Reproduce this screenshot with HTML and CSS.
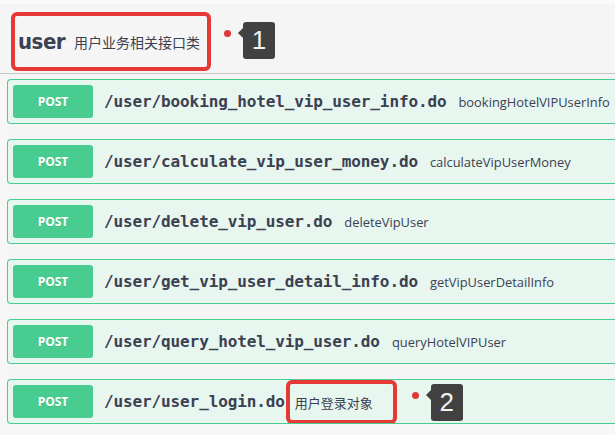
FILE: index.html
```html
<!DOCTYPE html>
<html lang="en">
<head>
  <meta charset="UTF-8" />
  <title>user</title>
  <link rel="stylesheet" href="styles.css">
</head>
<body>
  <div class="topbar"></div>
  <div class="tag-section">
    <!-- Tag header -->
    <div class="tag-header">
      <div class="mark mark-tag">
        <span class="tag-name">user</span>
        <span class="tag-desc">用户业务相关接口类</span>
      </div>
      <div class="callout">
        <span class="dot"></span>
        <span class="badge">1</span>
      </div>
    </div>

    <!-- Operations -->
    <div class="opblock">
      <span class="method">POST</span>
      <span class="path">/user/booking_hotel_vip_user_info.do</span>
      <span class="summary">bookingHotelVIPUserInfo</span>
    </div>
    <div class="opblock">
      <span class="method">POST</span>
      <span class="path">/user/calculate_vip_user_money.do</span>
      <span class="summary">calculateVipUserMoney</span>
    </div>
    <div class="opblock">
      <span class="method">POST</span>
      <span class="path">/user/delete_vip_user.do</span>
      <span class="summary">deleteVipUser</span>
    </div>
    <div class="opblock">
      <span class="method">POST</span>
      <span class="path">/user/get_vip_user_detail_info.do</span>
      <span class="summary">getVipUserDetailInfo</span>
    </div>
    <div class="opblock">
      <span class="method">POST</span>
      <span class="path">/user/query_hotel_vip_user.do</span>
      <span class="summary">queryHotelVIPUser</span>
    </div>
    <div class="opblock">
      <span class="method">POST</span>
      <span class="path path-tight">/user/user_login.do</span>
      <span class="mark mark-summary">用户登录对象</span>
      <div class="callout callout-op">
        <span class="dot"></span>
        <span class="badge">2</span>
      </div>
    </div>
  </div>
</body>
</html>
```

FILE: styles.css
```css
* {
  box-sizing: border-box;
}
body {
  margin: 0;
  background: #f7f7f7;
  font-family: 'Open Sans', sans-serif;
  color: #3b4151;
}
.topbar {
  height: 4px;
  background: #fafafa;
}
.tag-section {
  margin-left: 7px;
  background: #f5f5f5;
}
/* Tag header */
.tag-header {
  height: 70px;
  display: flex;
  align-items: center;
  margin-left: -7px;
  padding-left: 11px;
  border-bottom: 1px solid #c6c6c6;
  background: #f5f5f5;
}
.tag-name {
  font-family: 'DejaVu Sans Condensed', 'DejaVu Sans', sans-serif;
  font-stretch: condensed;
  font-weight: 700;
  font-size: 22px;
  letter-spacing: -0.5px;
  color: #3b4151;
}
.tag-desc {
  margin-left: 9px;
  font-family: 'Noto Sans CJK SC', sans-serif;
  font-size: 14px;
  color: #3b4151;
}
/* Red annotation boxes */
.mark {
  border: 4px solid #e53935;
  border-radius: 6px;
}
.mark-tag {
  width: 200px;
  height: 59px;
  margin-top: 6px;
  display: flex;
  align-items: center;
  padding-left: 3px;
}
.mark-summary {
  align-self: stretch;
  margin: -5px 0 -6px 1px;
  width: 111px;
  display: flex;
  align-items: center;
  padding: 0 0 0 5px;
  font-family: 'Noto Sans CJK SC', sans-serif;
  font-size: 13px;
  color: #3b4151;
}
/* Numbered callouts */
.callout {
  display: flex;
  align-items: flex-start;
  margin-left: 13px;
  margin-top: 4px;
}
.callout-op {
  margin-left: 15px;
  margin-top: 2px;
}
.dot {
  width: 7px;
  height: 7px;
  margin-top: 8px;
  border-radius: 50%;
  background: #e0383a;
}
.badge {
  position: relative;
  margin-left: 12px;
  width: 32px;
  height: 37px;
  display: flex;
  align-items: center;
  justify-content: center;
  background: #414141;
  border-radius: 3px;
  font-family: 'Liberation Sans', sans-serif;
  font-size: 26px;
  color: #f2f2f2;
}
.badge::before {
  content: "";
  position: absolute;
  left: -5px;
  top: 6px;
  border-top: 5px solid transparent;
  border-bottom: 5px solid transparent;
  border-right: 5px solid #414141;
}
/* Operation blocks */
.opblock {
  display: flex;
  align-items: center;
  height: 45px;
  margin: 5px 0 15px;
  padding: 5px;
  border: 1px solid #49cc90;
  border-right: none;
  border-radius: 4px 0 0 4px;
  background: #e7f6ef;
  white-space: nowrap;
  overflow: hidden;
}
.method {
  width: 80px;
  height: 33px;
  flex: none;
  display: flex;
  align-items: center;
  justify-content: center;
  background: #49cc90;
  border-radius: 3px;
  font-weight: 700;
  font-size: 12px;
  color: #fff;
  text-shadow: 0 1px 0 rgba(0,0,0,0.1);
}
.path {
  padding: 0 12px 0 11px;
  font-family: 'DejaVu Sans Mono', monospace;
  font-weight: 700;
  font-size: 16px;
  letter-spacing: -0.12px;
  color: #3b4151;
}
.path-tight {
  padding-right: 0;
}
.summary {
  font-size: 12.9px;
  color: #3b4151;
}
```
